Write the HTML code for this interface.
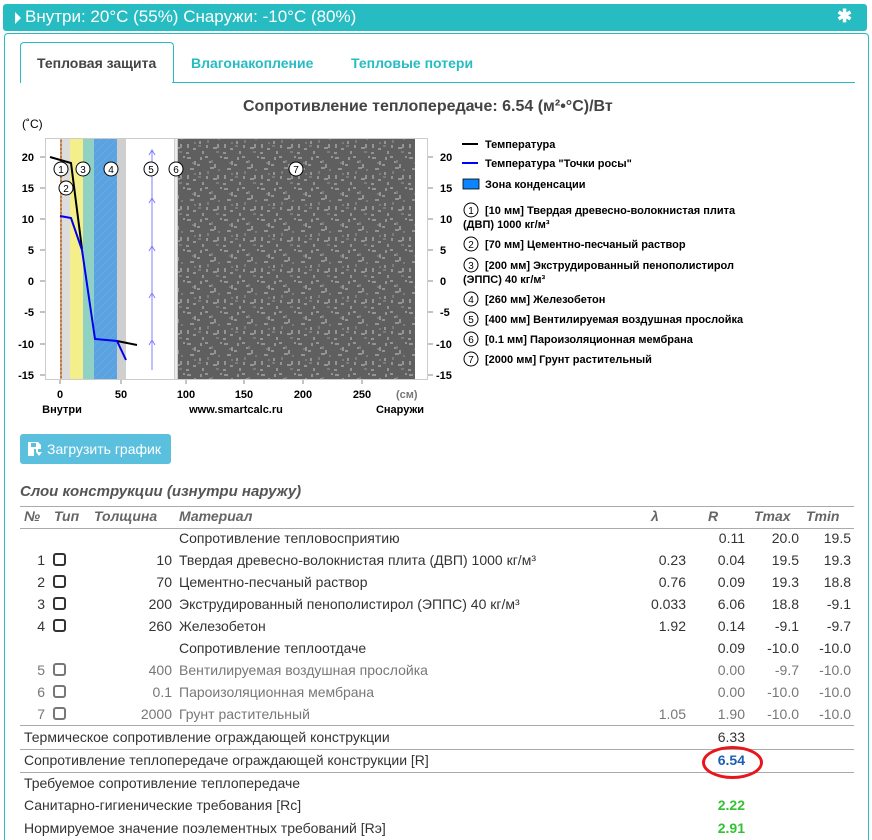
<!DOCTYPE html>
<html style="overflow:hidden"><head><meta charset="utf-8"><style>
html,body{margin:0;width:872px;height:840px;overflow:hidden}
body{background:#fff;font-family:"Liberation Sans",sans-serif;color:#333;position:relative}
.a{position:absolute;white-space:nowrap}
.bar{position:absolute;left:3px;top:4px;width:864px;height:27px;background:#26bcc2;border-radius:3px;color:#fff;font-size:17px}
.panel{position:absolute;left:4px;top:33px;width:863px;height:830px;border:1px solid #26bcc2;border-radius:4px}
.t{font-size:14px;position:absolute;white-space:nowrap}
.r{text-align:right}
.cb{position:absolute;width:9px;height:9px;border:2px solid #333;border-radius:3px}
.g{color:#777}
.g .cb{border-color:#777}
</style></head><body>
<div class="bar"><svg class="a" style="left:11px;top:8px" width="8" height="12"><path d="M1 0L7 6L1 12Z" fill="#fff"/></svg><span class="a" style="left:22px;top:3px;font-size:17px">Внутри: 20°C (55%) Снаружи: -10°C (80%)</span><span class="a" style="left:834px;top:2px;font-size:18px;font-weight:bold">&#x2731;</span></div>
<div class="panel"></div>
<div class="a" style="left:20px;top:42px;width:152px;height:40px;border:1px solid #26bcc2;border-bottom:none;border-radius:4px 4px 0 0;background:#fff"></div>
<div class="a" style="left:172px;top:82px;width:683px;height:1px;background:#26bcc2"></div>
<div class="a" style="left:37px;top:55px;font-size:14px;font-weight:bold;color:#444">Тепловая защита</div>
<div class="a" style="left:191px;top:55px;font-size:14px;font-weight:bold;color:#26bcc2">Влагонакопление</div>
<div class="a" style="left:351px;top:55px;font-size:14px;font-weight:bold;color:#26bcc2">Тепловые потери</div>
<div class="a" style="left:243px;top:98px;font-size:16px;font-weight:bold;color:#444">Сопротивление теплопередаче: 6.54 (м²•°С)/Вт</div>
<svg class="a" style="left:0;top:110px" width="872" height="310" viewBox="0 110 872 310" font-family="Liberation Sans" font-size="11" font-weight="bold">
<defs><pattern id="n" width="37" height="31" patternUnits="userSpaceOnUse">
<rect width="37" height="31" fill="#5f5f5f"/>
<g stroke="#c8c8c8" stroke-width="1"><path d="M2 3h4M10 6v4M20 2h3M30 9v4M5 14h4M15 17v3M25 13h4M33 20v4M8 25h3M18 27v3M28 24h4M12 10h3M22 21v3M3 20v4M35 2h2M16 2v3M1 29h3M24 7h2"/></g>
<g stroke="#999"><path d="M7 8h3M27 5v3M13 22h3M31 28h3M23 16v3M9 19h2M34 14v2"/></g></pattern>
<pattern id="h" width="8" height="8" patternUnits="userSpaceOnUse"><path d="M0 8L8 0" stroke="#7aa9d6" stroke-width=".6"/></pattern></defs>
<text x="22" y="128" font-weight="normal" font-size="12">(˚C)</text>
<rect x="45.5" y="138.5" width="382" height="241" fill="#fff" stroke="#ccc"/>
<rect x="60" y="139" width="2" height="240" fill="#d9a070"/>
<path d="M61 140V379" stroke="#8a5a30" stroke-dasharray="2 2"/>
<rect x="62" y="139" width="8" height="240" fill="#ddd"/>
<rect x="70" y="139" width="13" height="240" fill="#f4ef8a"/>
<rect x="83" y="139" width="11" height="240" fill="#8fd2c4"/>
<rect x="94" y="139" width="23" height="240" fill="#5aa3e3"/>
<rect x="94" y="139" width="23" height="240" fill="url(#h)"/>
<rect x="117" y="139" width="9" height="240" fill="#cfcfcf"/>
<rect x="174" y="139" width="4" height="240" fill="#ccc"/>
<rect x="175" y="139" width="2" height="240" fill="#fff" opacity=".6"/>
<rect x="178" y="139" width="237" height="240" fill="url(#n)"/>
<g stroke="#8080ff" fill="none"><path d="M152 200V150M149 155l3-5 3 5M152 248V198M149 203l3-5 3 5M152 296V246M149 251l3-5 3 5M152 343V293M149 298l3-5 3 5"/><path d="M152 370V340M149 345l3-5 3 5"/></g>
<path d="M50 157L71 163L82 249" stroke="#000" stroke-width="2" fill="none"/>
<path d="M117 341L137 345" stroke="#000" stroke-width="2"/>
<path d="M60 216L71 218L82 250L95 339L117 341L126 360" stroke="#0000ee" stroke-width="2" fill="none"/>
<g fill="#fff" stroke="#000"><circle cx="61" cy="169" r="7"/><circle cx="83" cy="169" r="7"/><circle cx="111" cy="169" r="7"/><circle cx="151" cy="169" r="7"/><circle cx="176" cy="169" r="7"/><circle cx="296" cy="169" r="7"/><circle cx="66" cy="188" r="7"/></g>
<g text-anchor="middle" font-size="10" font-weight="normal"><text x="61" y="173">1</text><text x="83" y="173">3</text><text x="111" y="173">4</text><text x="151" y="173">5</text><text x="176" y="173">6</text><text x="296" y="173">7</text><text x="66" y="192">2</text></g>
<g text-anchor="end"><text x="34" y="161">20</text><text x="34" y="192">15</text><text x="34" y="223">10</text><text x="34" y="254">5</text><text x="34" y="285">0</text><text x="34" y="316">-5</text><text x="34" y="348">-10</text><text x="34" y="379">-15</text></g>
<g><text x="440" y="161">20</text><text x="440" y="192">15</text><text x="440" y="223">10</text><text x="440" y="254">5</text><text x="440" y="285">0</text><text x="440" y="316">-5</text><text x="436" y="348">-10</text><text x="436" y="379">-15</text></g>
<g stroke="#888"><path d="M40 157h5M40 188h5M40 219h5M40 250h5M40 281h5M40 312h5M40 344h5M40 375h5M428 157h5M428 188h5M428 219h5M428 250h5M428 281h5M428 312h5M428 344h5M428 375h5M60 380v4M121 380v4M186 380v4M244 380v4M303 380v4M362 380v4"/></g>
<g text-anchor="middle"><text x="60" y="398">0</text><text x="121" y="398">50</text><text x="186" y="398">100</text><text x="244" y="398">150</text><text x="303" y="398">200</text><text x="362" y="398">250</text><text x="62" y="413">Внутри</text><text x="236" y="413">www.smartcalc.ru</text><text x="400" y="413">Снаружи</text></g>
<text x="396" y="398" fill="#777">(см)</text>
<path d="M462 144h16" stroke="#000" stroke-width="2"/><path d="M462 163h16" stroke="#00f" stroke-width="2"/>
<rect x="463" y="179" width="16" height="10" fill="#0a84ff" stroke="#000" stroke-width=".8"/>
<text x="485" y="148">Температура</text><text x="485" y="167">Температура "Точки росы"</text><text x="485" y="188">Зона конденсации</text>
<g fill="#fff" stroke="#000"><circle cx="471" cy="210" r="7"/><circle cx="471" cy="244" r="7"/><circle cx="471" cy="265" r="7"/><circle cx="471" cy="299" r="7"/><circle cx="471" cy="319" r="7"/><circle cx="471" cy="339" r="7"/><circle cx="471" cy="359" r="7"/></g>
<g text-anchor="middle" font-size="10" font-weight="normal"><text x="471" y="214">1</text><text x="471" y="248">2</text><text x="471" y="269">3</text><text x="471" y="303">4</text><text x="471" y="323">5</text><text x="471" y="343">6</text><text x="471" y="363">7</text></g>
<text x="485" y="214">[10 мм] Твердая древесно-волокнистая плита</text><text x="463" y="228">(ДВП) 1000 кг/м³</text>
<text x="485" y="248">[70 мм] Цементно-песчаный раствор</text>
<text x="485" y="269">[200 мм] Экструдированный пенополистирол</text><text x="463" y="283">(ЭППС) 40 кг/м³</text>
<text x="485" y="303">[260 мм] Железобетон</text>
<text x="485" y="323">[400 мм] Вентилируемая воздушная прослойка</text>
<text x="485" y="343">[0.1 мм] Пароизоляционная мембрана</text>
<text x="485" y="363">[2000 мм] Грунт растительный</text>
</svg>
<div class="a" style="left:20px;top:434px;width:151px;height:30px;background:#5bc0de;border-radius:3px;color:#fff;font-size:14px"><svg class="a" style="left:8px;top:8px" width="14" height="14"><path d="M0 0h10l3 3v4h-3v3h-2v-3h-2v7H0Z M3 1v4h5V1Z" fill="#fff" fill-rule="evenodd"/><path d="M8 10h6l-3 4Z" fill="#fff"/></svg><span class="a" style="left:27px;top:7px">Загрузить график</span></div>
<div class="a" style="left:20px;top:483px;font-size:15px;font-weight:bold;font-style:italic;color:#555">Слои конструкции (изнутри наружу)</div>
<div class="a" style="left:20px;top:506px;width:834px;height:1px;background:#aaa"></div>
<div class="a" style="left:20px;top:528px;width:834px;height:1px;background:#aaa"></div>
<div style="font-size:13px;font-weight:bold;font-style:italic;color:#666">
<span class="t" style="left:24px;top:508px">№</span><span class="t" style="left:54px;top:508px">Тип</span><span class="t" style="left:94px;top:508px">Толщина</span><span class="t" style="left:179px;top:508px">Материал</span><span class="t" style="left:651px;top:508px">λ</span><span class="t" style="left:708px;top:508px">R</span><span class="t" style="left:754px;top:508px">Tmax</span><span class="t" style="left:806px;top:508px">Tmin</span></div>
<div id="rows"></div>
<script>
var rows=[
["","",'','Сопротивление тепловосприятию','','0.11','20.0','19.5',0],
["1",1,'10','Твердая древесно-волокнистая плита (ДВП) 1000 кг/м³','0.23','0.04','19.5','19.3',0],
["2",1,'70','Цементно-песчаный раствор','0.76','0.09','19.3','18.8',0],
["3",1,'200','Экструдированный пенополистирол (ЭППС) 40 кг/м³','0.033','6.06','18.8','-9.1',0],
["4",1,'260','Железобетон','1.92','0.14','-9.1','-9.7',0],
["","",'','Сопротивление теплоотдаче','','0.09','-10.0','-10.0',0],
["5",1,'400','Вентилируемая воздушная прослойка','','0.00','-9.7','-10.0',1],
["6",1,'0.1','Пароизоляционная мембрана','','0.00','-10.0','-10.0',1],
["7",1,'2000','Грунт растительный','1.05','1.90','-10.0','-10.0',1]];
var h='';rows.forEach(function(r,i){var y=530+i*22;h+='<div class="'+(r[8]?'g':'')+'">'+
'<span class="t r" style="left:20px;width:25px;top:'+y+'px">'+r[0]+'</span>'+(r[1]?'<span class="cb" style="left:53px;top:'+(y+1)+'px"></span>':'')+
'<span class="t r" style="left:100px;width:72px;top:'+y+'px">'+r[2]+'</span><span class="t" style="left:179px;top:'+y+'px">'+r[3]+'</span>'+
'<span class="t r" style="left:630px;width:56px;top:'+y+'px">'+r[4]+'</span><span class="t r" style="left:700px;width:45px;top:'+y+'px">'+r[5]+'</span>'+
'<span class="t r" style="left:750px;width:49px;top:'+y+'px">'+r[6]+'</span><span class="t r" style="left:800px;width:51px;top:'+y+'px">'+r[7]+'</span></div>';});
document.getElementById('rows').innerHTML=h;
</script>
<div class="a" style="left:20px;top:725px;width:834px;height:1px;background:#aaa"></div>
<div class="a" style="left:20px;top:749px;width:834px;height:1px;background:#aaa"></div>
<div class="a" style="left:20px;top:772px;width:834px;height:1px;background:#aaa"></div>
<span class="t" style="left:24px;top:729px">Термическое сопротивление ограждающей конструкции</span><span class="t r" style="left:700px;width:45px;top:729px">6.33</span>
<span class="t" style="left:24px;top:752px">Сопротивление теплопередаче ограждающей конструкции [R]</span><span class="t r" style="left:700px;width:45px;top:752px;color:#1a5fb4;font-weight:bold">6.54</span>
<div class="a" style="left:702px;top:746px;width:55px;height:27px;border:3px solid #e8151b;border-radius:50%"></div>
<span class="t" style="left:24px;top:775px">Требуемое сопротивление теплопередаче</span>
<span class="t" style="left:24px;top:797px">Санитарно-гигиенические требования [Rc]</span><span class="t r" style="left:700px;width:45px;top:797px;color:#33c233;font-weight:bold">2.22</span>
<span class="t" style="left:24px;top:820px">Нормируемое значение поэлементных требований [Rэ]</span><span class="t r" style="left:700px;width:45px;top:820px;color:#33c233;font-weight:bold">2.91</span>
</body></html>
